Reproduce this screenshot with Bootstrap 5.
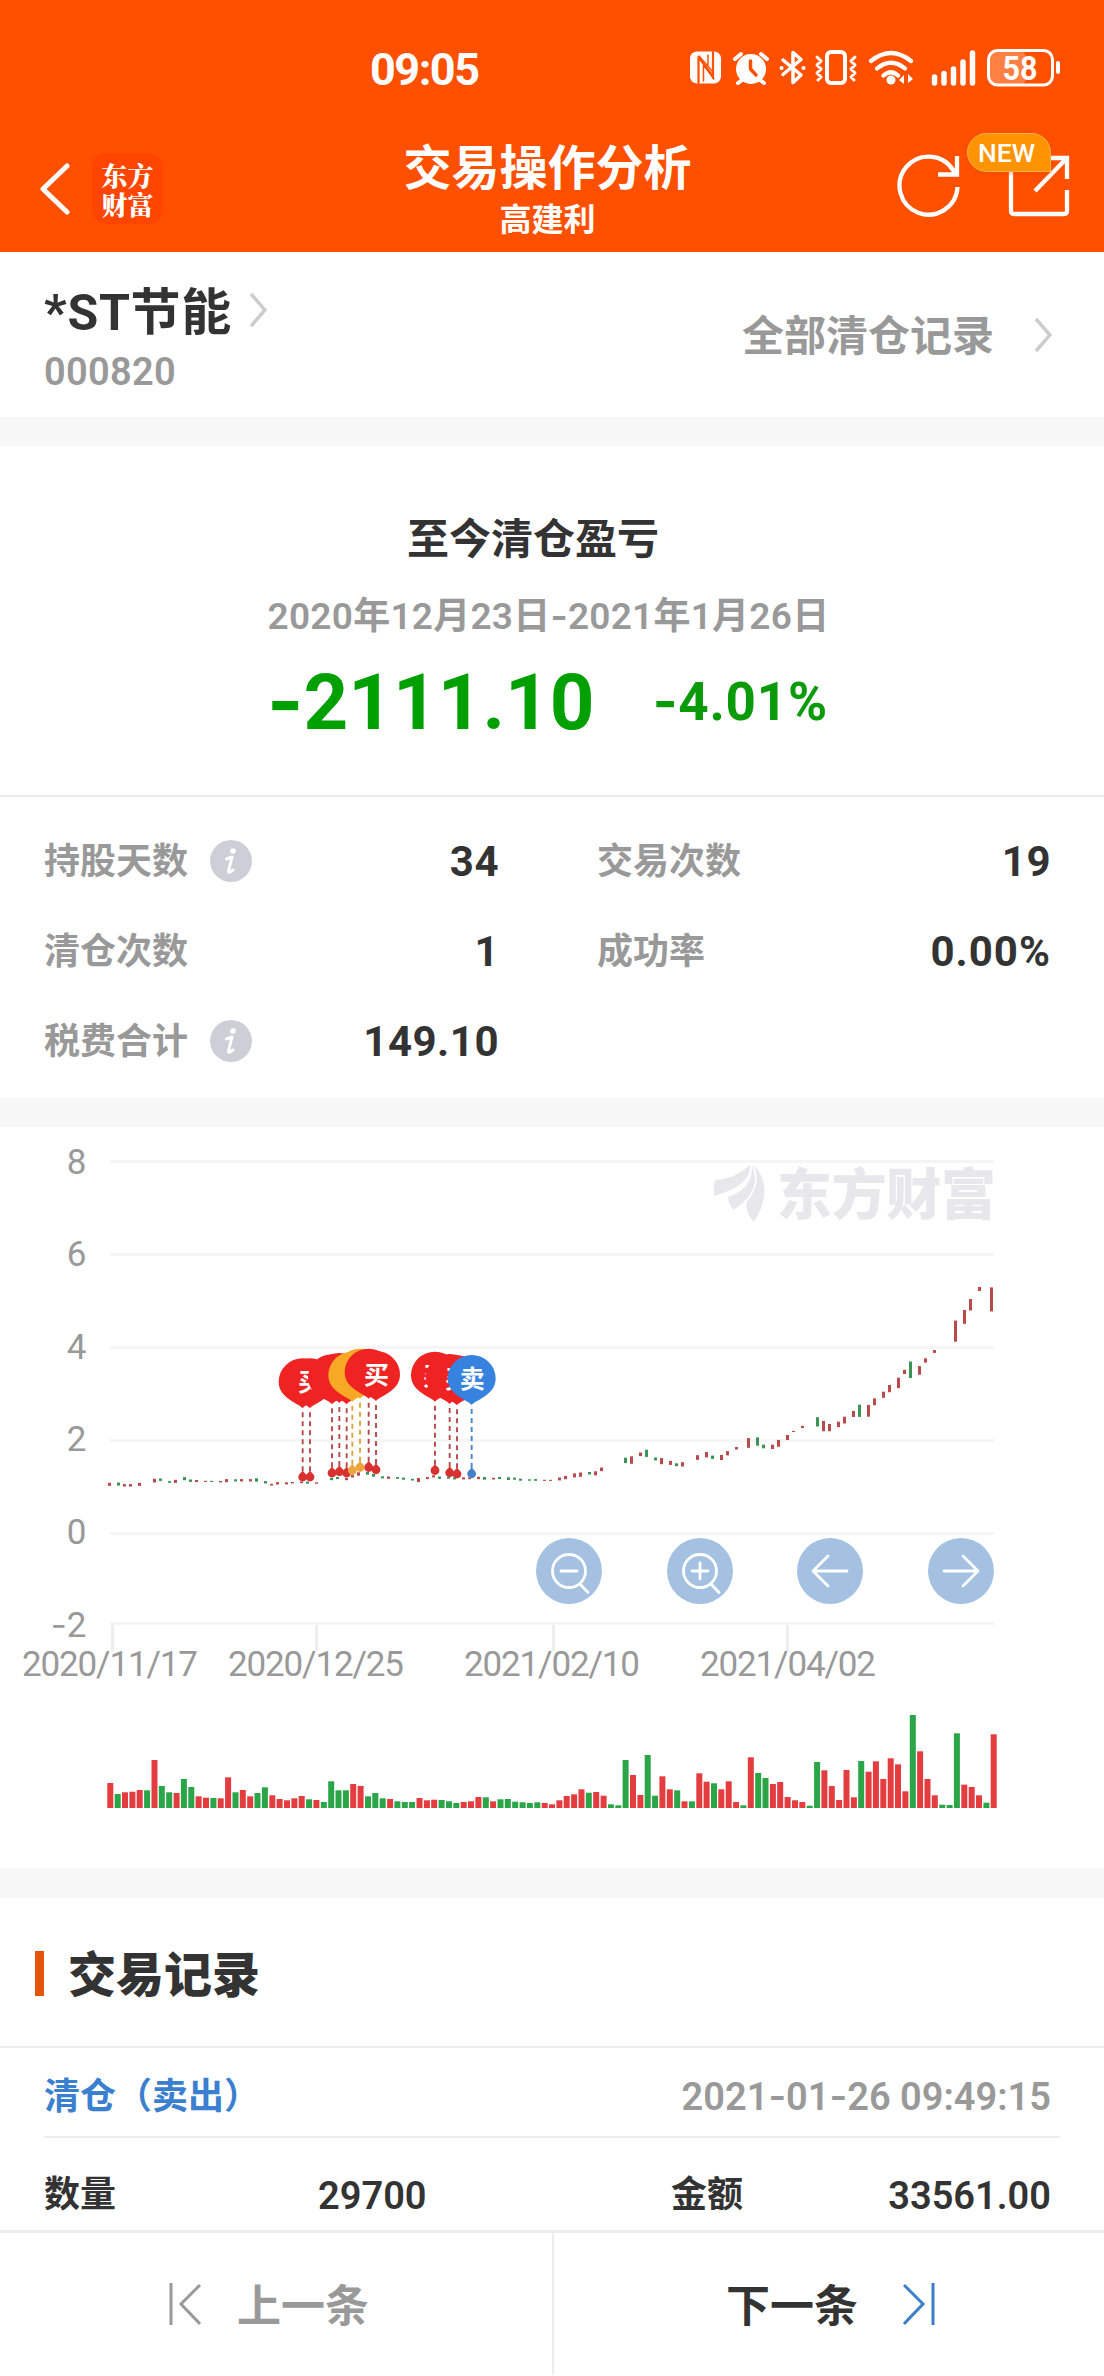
<!DOCTYPE html>
<html lang="zh-CN">
<head>
<meta charset="utf-8">
<meta name="viewport" content="width=device-width, initial-scale=1">
<title>交易操作分析</title>
<link rel="stylesheet" href="https://cdn.jsdelivr.net/npm/bootstrap@5.3.0/dist/css/bootstrap.min.css">
<style>
  body{font-family:Roboto,"Noto Sans CJK SC",sans-serif;color:#333;background:#fff;line-height:1;font-size:36px;font-weight:600}
  .screen{width:1104px;height:2376px;overflow:hidden}
  svg{display:block;flex:none}
  .top-area{height:252px;background:#ff5000;color:#fff}
  .status-line{height:96px;padding:45px 39px 0 370px}
  .clock{font-size:45px;font-weight:700;letter-spacing:-1.5px;line-height:50px}
  .title-line{height:156px;padding:0 34px 0 39px}
  .brand{width:71px;height:71px;border-radius:14px;background:#ff4500;font:900 26px/29px "Noto Serif CJK SC","Noto Sans CJK SC",sans-serif;margin-left:22px}
  .page-head{padding-top:45px;margin-right:14px}
  .page-title{font-size:48px;font-weight:700;line-height:56px}
  .page-sub{font-size:32px;line-height:40px;font-weight:700;margin-top:3px}
  .left-tools{width:260px;padding-top:29px}
  .right-tools{width:260px;padding-top:57px}
  .new-tag{left:-41px;top:-20px;width:84px;height:39px;border-radius:20px 20px 0 20px;background:#ff9300;border:1px solid #ffb04d;font-size:26.5px;font-weight:500;line-height:38px;padding-left:10px;box-shadow:0 2px 3px #d9480055}
  .stock-line{height:165px;padding:0 52px 0 44px}
  .stock-name{font-size:50px;font-weight:700;line-height:60px;letter-spacing:.7px}
  .muted{color:#999}
  .fs38{font-size:38px}
  .fs42{font-size:42px}
  .down-2{padding-top:4px}
  .band{height:29px;background:#f7f7f7}
  .summary{height:351px;padding-top:69px;border-bottom:2px solid #ededed}
  .period{font-size:37px;line-height:44px;margin-top:29px;letter-spacing:.25px}
  .gain{color:#00a000;font-weight:700;margin-top:23px;height:80px}
  .gain-amt{font-size:78px;margin-right:58px}
  .gain-pct{font-size:53px;color:#0a9a0a;letter-spacing:.8px}
  .dash{font-family:Inter,sans-serif}
  .stats{height:301px;padding:20px 53px 0 44px}
  .stat-line{height:90px}
  .stat-cell{width:455px}
  .stat-cell + .stat-cell{margin-left:98px;width:454px}
  .stat-val{font-size:42px;font-weight:700;letter-spacing:.5px}
  .info-dot{width:42px;height:42px;margin:0 0 3px 22px}
  .chart-box{height:741px}
  .chart-tools{left:536px;top:411px;width:458px}
  .tool-btn{width:66px;height:66px;background:#a4c1e2;border-radius:50%;border:0;padding:0}
  .rec-head{height:150px;border-bottom:2px solid #ededed;padding:3px 0 0 35px}
  .rec-head i{width:9px;height:45px;background:#e4550b;margin-right:24px}
  .rec-head b{font-size:48px;padding-top:4px}
  .rec-line{height:90px;padding:9px 9px 0 0;border-bottom:2px solid #ededed;margin:0 44px;margin-right:44px}
  .blue-txt{color:#3a7fd0}
  .qty-line{height:92px;padding:39px 53px 0 44px}
  .foot{height:145px;border-top:3px solid #ececec;font-size:44px;font-weight:700}
  .foot .w-50 + .w-50{border-left:2px solid #ececec}
  .foot span{padding-top:5px}
</style>
<script src="https://cdn.jsdelivr.net/npm/bootstrap@5.3.0/dist/js/bootstrap.bundle.min.js"></script>
</head>
<body>
<div class="screen d-flex flex-column">
  <header class="top-area">
    <div class="status-line d-flex justify-content-between">
      <span class="clock">09:05</span>
      <svg width="380" height="45" viewBox="685 45 380 45" fill="none" stroke="#fff" stroke-linecap="round" stroke-linejoin="round">
        <rect x="690" y="51.500" width="31" height="32" rx="7" fill="#fff" stroke="none"/>
        <path d="M698.500 83V57L713 76.500M713 52V78" stroke="#ff5000" stroke-width="2.200"/>
        <path d="M703.500 65V81M703.500 65L714 79M708 55V65M699 56L712 71" stroke="#ff5000" stroke-width="1.500"/>
        <circle cx="751" cy="69" r="15" fill="#fff" stroke="none"/>
        <path d="M735 59l6-5M767 59l-6-5M742 80l-4 3M760 80l4 3" stroke-width="4"/>
        <path d="M750.500 61V69l5.500 6" stroke="#ff5000" stroke-width="3.500"/>
        <path d="M783 60l18 15-8 7.500v-30l8 7-18 15" stroke-width="3.500"/>
        <path d="M781.500 68h.1M803.500 68h.1" stroke-width="4"/>
        <rect x="827" y="52" width="18" height="31" rx="4" stroke-width="4"/>
        <path d="M817 57l4 4-4 4 4 4-4 4 4 4-3 3M855 57l-4 4 4 4-4 4 4 4-4 4 3 3" stroke-width="3"/>
        <path d="M871 61Q891 45 911 61M877 68.500Q891 57 905 68.500M883.500 75.500Q891 69 898 75.500" stroke-width="4.200"/>
        <circle cx="891" cy="80" r="4.500" fill="#fff" stroke="none"/>
        <path d="M899 80l5-5v9zM913 79l-5-5v9z" fill="#fff" stroke="none"/>
        <path d="M934.500 80V86M944 76.500V86M953.500 72V86M963 65V86M972.500 56V86" transform="translate(0 -3)" stroke-width="5.500"/>
        <rect x="989" y="51" width="37" height="34" rx="7" fill="#ff8042" stroke="none"/>
        <rect x="988.500" y="50.500" width="64" height="34.500" rx="9" stroke-width="3"/>
        <path d="M1058 63v9" stroke-width="4"/>
        <text x="1020" y="80" text-anchor="middle" font-size="33" font-weight="700" fill="#fff" stroke="none" textLength="35" lengthAdjust="spacingAndGlyphs">58</text>
      </svg>
    </div>
    <div class="title-line d-flex justify-content-between">
      <div class="left-tools d-flex align-items-center">
        <svg width="31" height="54" viewBox="0 0 31 54" fill="none" stroke="#fff" stroke-width="5" stroke-linecap="round" stroke-linejoin="round"><path d="M28 4L4 27 28 50"/></svg>
        <div class="brand d-flex flex-column align-items-center justify-content-center"><span>东方</span><span>财富</span></div>
      </div>
      <div class="page-head text-center">
        <div class="page-title">交易操作分析</div>
        <div class="page-sub">高建利</div>
      </div>
      <div class="right-tools d-flex justify-content-end">
        <svg width="66" height="68" viewBox="896 153 66 68" fill="none" stroke="#fff" stroke-width="4.300"><path d="M957.500 187A29 29 0 1 1 953 170L957 175M957 156V174.500H938"/></svg>
        <div class="position-relative" style="margin-left:46px">
          <svg width="62" height="68" viewBox="1008 153 62 68" fill="none" stroke="#fff" stroke-width="4.300"><path d="M1045 158H1011V211q0 3 3 3H1064q3 0 3-3V190M1042 158H1067V179M1035 191L1066 159"/></svg>
          <span class="new-tag position-absolute">NEW</span>
        </div>
      </div>
    </div>
  </header>

  <section class="stock-line d-flex justify-content-between">
    <div style="padding-top:31px">
      <div class="d-flex align-items-center"><span class="stock-name">*ST节能</span>
        <svg width="18" height="36" viewBox="0 0 18 36" fill="none" stroke="#ccc" stroke-width="3.500" style="margin-left:17px;margin-bottom:7px"><path d="M2 2L16 18 2 34"/></svg></div>
      <div class="fs38 muted" style="margin-top:10px;letter-spacing:.3px">000820</div>
    </div>
    <div class="d-flex align-items-center">
      <span class="fs42 muted down-2">全部清仓记录</span>
      <svg width="18" height="36" viewBox="0 0 18 36" fill="none" stroke="#ccc" stroke-width="3.500" style="margin-left:40px"><path d="M2 2L16 18 2 34"/></svg>
    </div>
  </section>
  <div class="band"></div>

  <section class="summary d-flex flex-column align-items-center">
    <div class="fs42 fw-bold" style="line-height:50px;padding-right:38px">至今清仓盈亏</div>
    <div class="period muted" style="padding-right:7px">2020年12月23日<span class="dash">-</span>2021年1月26日</div>
    <div class="gain d-flex align-items-center" style="padding-right:9px"><span class="gain-amt"><span class="dash">-</span>2111.10</span><span class="gain-pct"><span class="dash">-</span>4.01%</span></div>
  </section>

  <section class="stats">
    <div class="stat-line d-flex">
      <div class="stat-cell d-flex align-items-center"><span class="muted">持股天数</span>
        <svg class="info-dot" viewBox="0 0 42 42"><circle cx="21" cy="21" r="21" fill="#ccd0d6"/><circle cx="23" cy="11" r="2.800" fill="#fff"/><path d="M16.500 19l5.500-2-3.500 14q-.7 3 4.500-1" fill="none" stroke="#fff" stroke-width="3" stroke-linejoin="round" stroke-linecap="round"/></svg>
        <span class="stat-val ms-auto">34</span></div>
      <div class="stat-cell d-flex align-items-center"><span class="muted">交易次数</span><span class="stat-val ms-auto">19</span></div>
    </div>
    <div class="stat-line d-flex">
      <div class="stat-cell d-flex align-items-center"><span class="muted">清仓次数</span><span class="stat-val ms-auto">1</span></div>
      <div class="stat-cell d-flex align-items-center"><span class="muted">成功率</span><span class="stat-val ms-auto" style="letter-spacing:1px">0.00%</span></div>
    </div>
    <div class="stat-line d-flex">
      <div class="stat-cell d-flex align-items-center"><span class="muted">税费合计</span>
        <svg class="info-dot" viewBox="0 0 42 42"><circle cx="21" cy="21" r="21" fill="#ccd0d6"/><circle cx="23" cy="11" r="2.800" fill="#fff"/><path d="M16.500 19l5.500-2-3.500 14q-.7 3 4.500-1" fill="none" stroke="#fff" stroke-width="3" stroke-linejoin="round" stroke-linecap="round"/></svg>
        <span class="stat-val ms-auto">149.10</span></div>
    </div>
  </section>
  <div class="band"></div>

  <section class="chart-box position-relative">
    <svg id="chart" width="1104" height="741" viewBox="0 1128 1104 741" font-family="Roboto,'Noto Sans CJK SC',sans-serif"></svg>
    <div class="chart-tools position-absolute d-flex justify-content-between">
      <button class="tool-btn" aria-label="缩小"><svg width="66" height="66" viewBox="0 0 66 66" fill="none" stroke="#fff" stroke-width="2.800" stroke-linecap="round"><circle cx="33" cy="33" r="16.500"/><path d="M25 33h16M44 46l8 8.500"/></svg></button>
      <button class="tool-btn" aria-label="放大"><svg width="66" height="66" viewBox="0 0 66 66" fill="none" stroke="#fff" stroke-width="2.800" stroke-linecap="round"><circle cx="33" cy="33" r="16.500"/><path d="M25 33h16M33 25v16M44 46l8 8.500"/></svg></button>
      <button class="tool-btn" aria-label="左移"><svg width="66" height="66" viewBox="0 0 66 66" fill="none" stroke="#fff" stroke-width="2.800" stroke-linecap="round" stroke-linejoin="round"><path d="M50 33H16M31 18L16 33 31 48"/></svg></button>
      <button class="tool-btn" aria-label="右移"><svg width="66" height="66" viewBox="0 0 66 66" fill="none" stroke="#fff" stroke-width="2.800" stroke-linecap="round" stroke-linejoin="round"><path d="M16 33H50M35 18L50 33 35 48"/></svg></button>
    </div>
  </section>
  <div class="band" style="height:30px"></div>

  <section>
    <div class="rec-head d-flex align-items-center"><i></i><b>交易记录</b></div>
    <div class="rec-line d-flex justify-content-between align-items-center"><span class="blue-txt">清仓（卖出）</span><span class="muted fs38">2021<span class="dash">-</span>01<span class="dash">-</span>26 09:49:15</span></div>
    <div class="qty-line d-flex"><span style="width:274px">数量</span><span class="fs38" style="width:353px">29700</span><span>金额</span><span class="fs38 ms-auto">33561.00</span></div>
  </section>

  <footer class="foot d-flex">
    <div class="w-50 d-flex align-items-center muted" style="padding-left:169px"><svg width="32" height="44" viewBox="169 2282 32 44" fill="none" stroke="#999" stroke-width="3"><path d="M171 2283V2325M200 2285L181 2304 200 2324"/></svg><span style="margin-left:36px">上一条</span></div>
    <div class="w-50 d-flex align-items-center" style="padding-left:172px"><span>下一条</span><svg width="32" height="44" viewBox="903 2282 32 44" fill="none" stroke="#3a7fc8" stroke-width="3" style="margin-left:45px"><path d="M933 2283V2325M904 2285L923 2304 904 2324"/></svg></div>
  </footer>
</div>
<script>
  const R = '#b94a4c', G = '#3a9455';
  let out = '';
  // grid, axis labels and ticks
  [[8,1162.5,1162],[6,1255.5,1254],[4,1348.5,1347],[2,1441.5,1439.5],[0,1534.5,1532],[-2,1624.5,1625]].forEach(([v,y,ty]) => {
    out += `<rect x="110" y="${y-1.5}" width="884" height="3" fill="#f5f5f5"/>`;
    const t = v < 0 ? `<tspan font-family="Inter">-</tspan>${-v}` : v;
    out += `<text x="86.500" y="${ty+12.5}" text-anchor="end" font-size="35" font-weight="400" fill="#999">${t}</text>`;
  });
  [[112.5,22],[316.5,228],[553.5,464],[787.5,700]].forEach(([x,tx],i) => {
    out += `<rect x="${x-1.5}" y="1626" width="3" height="26" fill="#eee"/>`;
    out += `<text x="${tx}" y="1677" font-size="35" font-weight="400" fill="#999" textLength="176">${['2020/11/17','2020/12/25','2021/02/10','2021/04/02'][i]}</text>`;
  });
  // watermark
  out += `<g fill="#e7e7ec"><path d="M714 1197Q713 1184 716 1181 735 1180 750 1166 752 1186 714 1197ZM733 1211Q728 1203 728 1198 753 1190 752 1166 763 1192 733 1211ZM754 1223Q744 1212 747 1203 762 1184 754 1166 775 1190 754 1223Z"/>
    <text x="777" y="1215" font-size="55" font-weight="900" textLength="219">东方财富</text></g>`;
  // candles: centre x, centre y, height, colour
  const early = '306,1096,8,r 332,1095,8,g 348,1099,6,r 365,1099,6,r 390,1096,8,r 432,1085,10,r 449,1082,6,g 474,1089,4,g 491,1087,8,r 516,1079,8,g 533,1085,6,g 550,1086,5,r 575,1087,2,r 592,1087,2,g 617,1088,3,r 634,1085,8,r 659,1084,5,g 676,1084,6,r 701,1084,6,r 718,1083,9,g 743,1090,6,g 760,1097,4,r 777,1093,6,r 802,1093,5,r 819,1091,3,r 844,1090,4,r 861,1091,5,g 886,1092,3,r 928,1080,6,g 945,1077,5,g 970,1080,6,r 987,1072,6,r 1004,1065,9,r 1029,1063,7,g 1046,1069,7,g 1071,1075,5,g 1088,1076,6,r 1113,1077,4,g 1130,1079,5,g 1155,1082,4,g 1172,1083,11,r 1197,1077,5,r 1214,1072,5,r 1231,1076,6,g 1256,1076,5,g 1272,1078,5,g 1298,1078,5,r 1315,1078,4,r 1340,1077,6,r 1357,1078,7,g 1382,1079,4,r 1399,1077,5,g 1424,1079,7,g 1441,1079,5,g 1457,1082,5,g 1483,1083,3,g 1500,1083,4,g 1525,1084,2,r 1542,1084,2,r';
  const late = '54,1008,7,r 71,1004,8,r 96,998,10,r 113,996,11,r 137,992,6,g 154,992,10,r 171,981,9,r 238,956,14,g 254,955,20,r 279,939,9,r 296,936,19,g 321,952,7,g 338,958,16,r 363,963,10,r 379,968,7,g 396,967,11,r 438,948,12,r 463,940,14,r 480,947,8,g 504,948,13,r 521,936,11,r 546,922,6,r 580,907,26,r 605,903,22,g 621,917,9,g 647,918,11,r 663,908,18,r 688,892,13,r 705,875,2,r 730,862,5,r 771,848,25,g 788,860,28,r 805,864,19,r 830,855,14,r 847,843,18,r 872,826,16,r 888,817,33,g 913,817,32,r 930,792,18,r 955,772,16,r 972,755,19,r 997,739,28,r 1014,708,11,r 1030,702,45,g 1055,704,23,r 1072,676,11,r 1097,651,7,r 1155,594,58,r 1180,554,38,r 1197,520,31,r 1222,476,10,r 1256,505,66,r';
  const candles = (s, x0, kx, ky) => s.split(' ').forEach(c => {
    const [x,y,h,k] = c.split(',');
    out += `<rect x="${Math.round(x0 + x/kx - 1.5)}" y="${(1120 + (y - h/2)/ky - .2).toFixed(1)}" width="3" height="${(h/ky + .4).toFixed(1)}" fill="${k=='r'?R:G}"/>`;
  });
  candles(early, 0, 2.8, 3);
  candles(late, 540, 2.78, 2.8);
  // trade pins; only those whose face is not covered by the next pin carry a label
  [[188,475,'r'],[210,475,'r','买'],[276,463,'r'],[298,459,'r'],[320,463,'r'],[337,455,'o'],[360,446,'o'],[386,446,'r'],[408,453,'r','买'],[585,455,'r','买'],[629,462,'r'],[651,466,'r','买'],[695,465,'b','卖']].forEach(([px,py,k,label]) => {
    const x = 240 + px/3, y = 1320 + py/3, t = y - 69;
    const [c, d, l] = {r:['#f02323','#d93030','#b8494b'], o:['#f7a824','#eea43c','#dba640'], b:['#3782de','#4580cc','#4a86c4']}[k];
    out += `<path d="M${x} ${t}V${y-4}" stroke="${l}" stroke-width="1.900" stroke-dasharray="5 4" stroke-dashoffset="-4"/>
      <path d="M${x} ${y-6.5}l2.500 2.700a4.400 4.400 0 1 1-5 0z" fill="${d}"/>
      <path d="M${x} ${t}C${x-4} ${t-5} ${x-24} ${t-10} ${x-24} ${t-26.500}A24 23.500 0 0 1 ${x+24} ${t-26.500}C${x+24} ${t-10} ${x+4} ${t-5} ${x} ${t}Z" fill="${c}"/>`;
    if (label) out += `<text x="${x+.5}" y="${t-17}" font-size="25" font-weight="700" fill="#fff" text-anchor="middle">${label}</text>`;
  });
  // volume: negative = falling day
  const vol = [75,-42,47,49,54,-53,144,-66,-47,45,-87,-63,35,31,-30,29,92,-47,54,35,-45,-62,38,27,23,29,36,-26,24,-18,-80,-53,-53,72,66,-35,-45,-29,27,-20,-18,-18,30,23,25,-24,-20,-15,18,20,33,-32,20,-26,-27,-19,-17,-15,-17,15,11,23,36,41,56,-46,48,37,-11,-8,-144,99,39,-159,-37,95,56,-53,20,-20,104,79,-74,56,80,18,-8,152,-105,-90,72,78,33,23,18,-7,-138,113,66,24,114,32,-141,109,140,87,149,131,50,-279,170,87,38,-10,-9,-224,70,63,38,-16,221];
  vol.forEach((v,i) => {
    out += `<rect x="${(107.300 + i*7.362).toFixed(1)}" y="${(1809 - Math.abs(v)/3).toFixed(1)}" width="6" height="${(Math.abs(v)/3).toFixed(1)}" fill="${v>0?'#e43d40':'#2aa648'}"/>`;
  });
  document.getElementById('chart').innerHTML = out;
</script>
</body>
</html>
